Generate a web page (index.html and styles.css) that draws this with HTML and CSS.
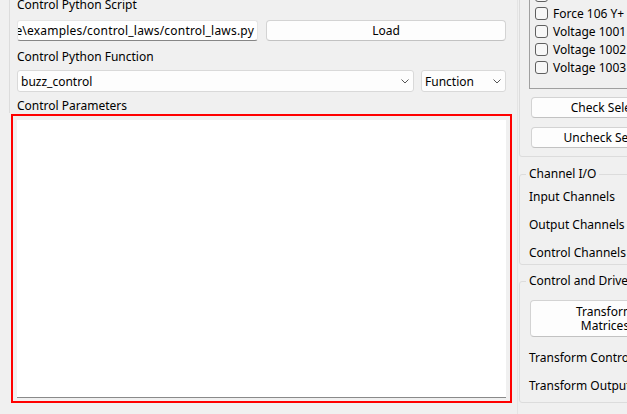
FILE: index.html
```html
<!DOCTYPE html>
<html>
<head>
<meta charset="utf-8">
<link rel="stylesheet" href="styles.css">
</head>
<body>
<div class="app">
  <div class="left">
    <div class="form">
      <div class="label">Control Python Script</div>
      <div class="row r1">
        <div class="lineedit"><span>C:\Users\user\rattlesnake\examples/control_laws/control_laws.py</span></div>
        <div class="btn load">Load</div>
      </div>
      <div class="label l2">Control Python Function</div>
      <div class="row r2">
        <div class="combo main"><span>buzz_control</span><svg class="chev" width="8" height="5" viewBox="0 0 8 5"><polyline points="0.5,0.5 4,4 7.5,0.5" fill="none" stroke="#555" stroke-width="1"/></svg></div>
        <div class="combo type"><span>Function</span><svg class="chev" width="8" height="5" viewBox="0 0 8 5"><polyline points="0.5,0.5 4,4 7.5,0.5" fill="none" stroke="#555" stroke-width="1"/></svg></div>
      </div>
      <div class="label l3">Control Parameters</div>
    </div>
    <div class="highlight"><div class="textarea"></div></div>
  </div>
  <div class="right">
    <div class="group first">
      <div class="list">
        <div class="item"><span class="cb"></span>Force 106 Y-</div>
        <div class="item"><span class="cb"></span>Force 106 Y+</div>
        <div class="item"><span class="cb"></span>Voltage 1001</div>
        <div class="item"><span class="cb"></span>Voltage 1002</div>
        <div class="item"><span class="cb"></span>Voltage 1003</div>
      </div>
      <div class="btn wide b1">Check Selected</div>
      <div class="btn wide b2">Uncheck Selected</div>
    </div>
    <fieldset class="gbox io">
      <legend>Channel I/O</legend>
      <div class="lbl">Input Channels</div>
      <div class="lbl">Output Channels</div>
      <div class="lbl">Control Channels</div>
    </fieldset>
    <fieldset class="gbox cd">
      <legend>Control and Drive Transforms</legend>
      <div class="btn tm"><span class="tml">Transform</span><span class="tml">Matrices</span></div>
      <div class="lbl">Transform Control Channels</div>
      <div class="lbl">Transform Output Channels</div>
    </fieldset>
  </div>
</div>
</body>
</html>
```

FILE: styles.css
```css
* { box-sizing: border-box; }
html, body { margin: 0; padding: 0; }
body {
  background: #f0f0f0;
  font-family: "Noto Sans", "Open Sans", sans-serif;
  font-size: 12px;
  color: #000;
  width: 627px;
  height: 414px;
  overflow: hidden;
}
.app { display: flex; height: 414px; align-items: flex-start; }

/* left side */
.left { flex: none; width: 517px; }
.form {
  margin: -4px 0 0 9px;
  padding-left: 7px;
  border-left: 1px solid #dcdcdc;
  width: 497px;
  display: flex;
  flex-direction: column;
}
.label { height: 16px; line-height: 17px; white-space: nowrap; }
.l2 { margin-top: 7px; }
.l3 { margin-top: 5px; }
.row { display: flex; }
.r1 { margin-top: 8px; height: 21px; gap: 8px; }
.r2 { margin-top: 6px; height: 22px; gap: 7px; }
.lineedit {
  flex: none;
  width: 241px;
  background: #fff;
  border: 1px solid #e5e5e5;
  border-bottom-color: #868686;
  border-radius: 3px;
  display: flex;
  justify-content: flex-end;
  align-items: center;
  overflow: hidden;
  padding-right: 3px;
  white-space: nowrap;
  letter-spacing: 0.2px;
}
.btn {
  background: #fdfdfd;
  border: 1px solid #d3d3d3;
  border-bottom-color: #c2c2c2;
  border-radius: 4px;
  display: flex;
  align-items: center;
  justify-content: center;
  white-space: nowrap;
}
.load { flex: none; width: 240px; }
.combo {
  flex: none;
  background: #fdfdfd;
  border: 1px solid #d9d9d9;
  border-radius: 3px;
  display: flex;
  align-items: center;
  justify-content: space-between;
  padding: 0 4px 0 3px;
}
.combo.main { width: 397px; }
.combo.type { width: 85px; }
.chev { display: block; }

.highlight {
  margin: 1px 0 0 11px;
  width: 501px;
  border: 2px solid #ff0000;
  padding: 4px 4px 3px 4px;
}
.textarea {
  height: 278px;
  background: #fff;
  border-bottom: 1px solid #8a8a8a;
}

/* right side */
.right {
  flex: none;
  width: 210px;
  align-self: stretch;
  border-left: 1px solid #e4e4e4;
  padding-left: 1px;
}
.group.first {
  margin-top: -15px;
  border: 1px solid #dcdcdc;
  border-top: none;
  border-radius: 0 0 3px 3px;
  padding: 0 0 8px 9px;
}
.list {
  border: 1px solid #a0a0a0;
  padding: 0 0 12px 5px;
  display: flex;
  flex-direction: column;
}
.item {
  height: 18px;
  display: flex;
  align-items: center;
  gap: 5px;
  white-space: nowrap;
}
.cb {
  flex: none;
  width: 13px;
  height: 13px;
  border: 1px solid #5f5f5f;
  border-radius: 3px;
  background: #f7f7f7;
}
.wide { width: 164px; height: 21px; margin-left: 2px; }
.b1 { margin-top: 8px; }
.b2 { margin-top: 9px; }

.gbox {
  margin: 0;
  border: 1px solid #dcdcdc;
  border-radius: 3px;
  padding: 0 0 0 9px;
  min-width: 0;
}
.gbox legend {
  margin-left: -3px;
  padding: 0 3px;
  height: 16px;
  line-height: 16px;
  white-space: nowrap;
}
.io { margin-top: 9px; padding-top: 6px; padding-bottom: 4px; }
.cd { margin-top: 8px; padding-top: 11px; padding-bottom: 9px; }
.gbox .lbl { height: 16px; line-height: 17px; white-space: nowrap; }
.io .lbl + .lbl { margin-top: 12px; }
.tm {
  margin-left: 1px;
  width: 150px;
  height: 37px;
  flex-direction: column;
  gap: 0;
  padding-top: 1px;
}
.tml { display: block; height: 14px; line-height: 14px; }
.cd .lbl { margin-top: 12px; }
```
